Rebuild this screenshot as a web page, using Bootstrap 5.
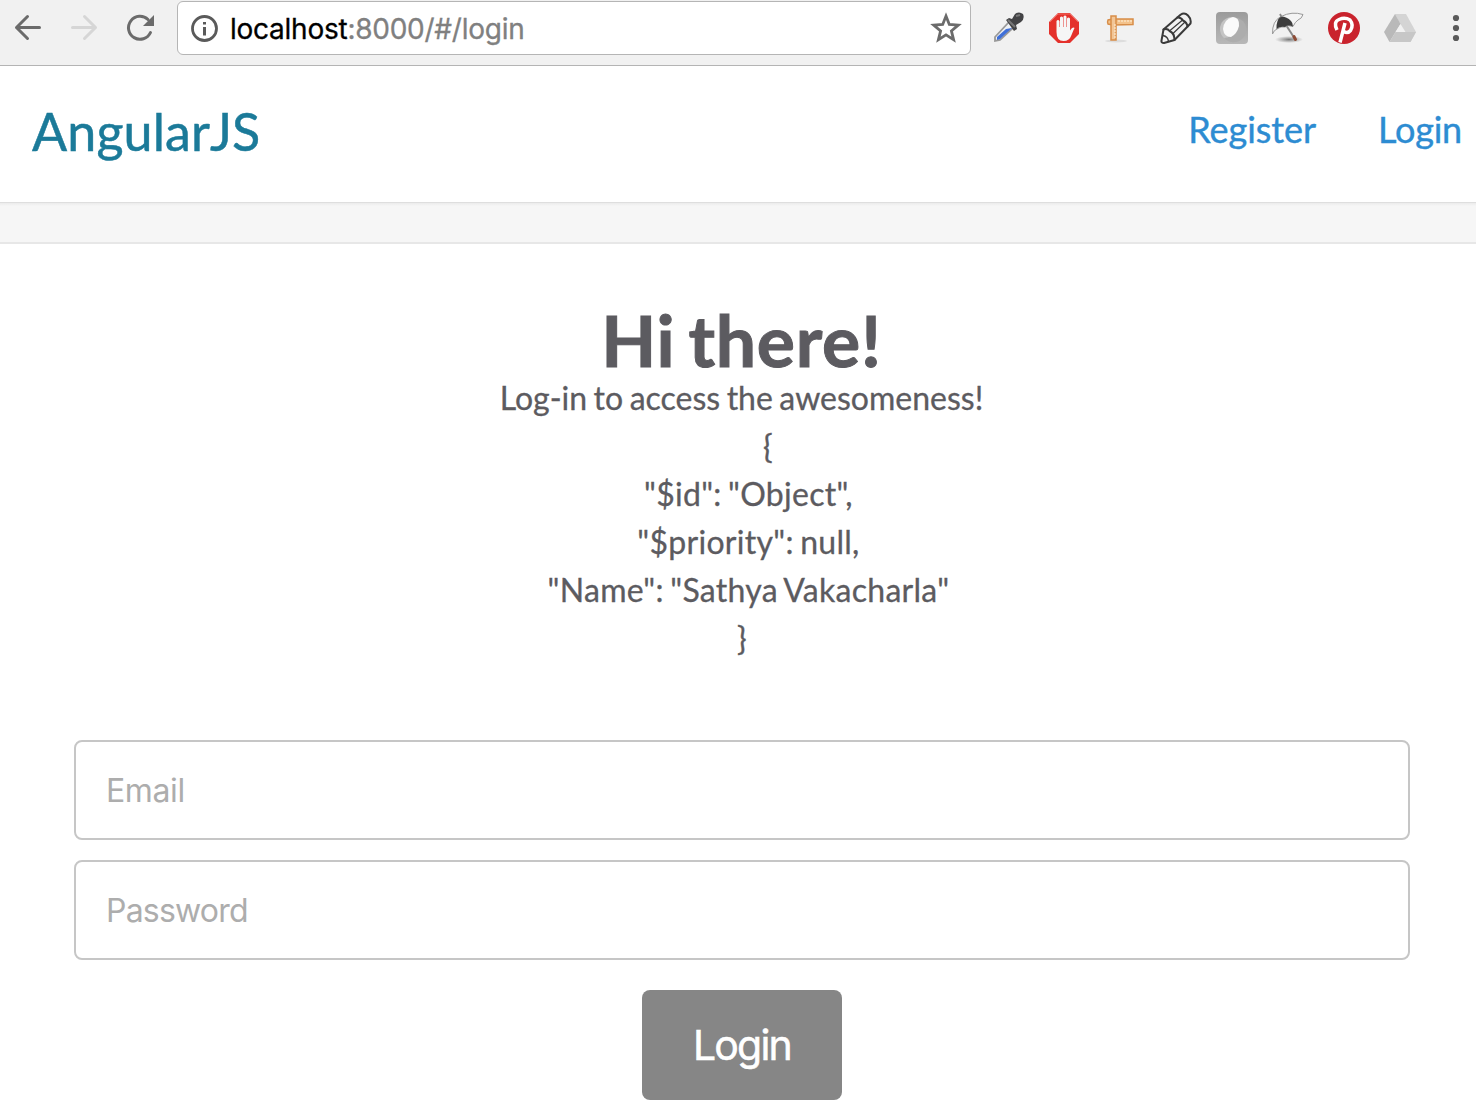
<!DOCTYPE html>
<html lang="en">
<head>
<meta charset="utf-8">
<title>AngularJS</title>
<meta name="viewport" content="width=device-width, initial-scale=1">
<link href="https://cdn.jsdelivr.net/npm/bootstrap@5.3.0/dist/css/bootstrap.min.css" rel="stylesheet">
<style>
body{font-family:Lato,"Liberation Sans",sans-serif;color:#5c5b60;background:#fff;height:1110px;overflow:hidden}
svg{display:block;flex:none}
.toolbar{height:66px;background:#f1f1f1;border-bottom:1px solid #b4b4b4}
.nav-icons{padding:12px 0 0 12px;width:177px;gap:24px}
.omnibox{width:794px;height:54px;margin-top:1px;background:#fff;border:1px solid #b5b5b5;border-radius:6px;padding:0 8px 0 10px}
.url{font:400 28px/52px Inter,Roboto,sans-serif;color:#808080;margin-left:10px;padding-top:2px;letter-spacing:-.25px;white-space:nowrap;-webkit-text-stroke:.3px}
.url b{color:#000;font-weight:400}
.exts{padding:12px 0 0 21px;gap:24px}
.site-header{height:136px;padding:0 14px 11px 32px;background:#fff}
.site-header nav{gap:62px}
.brand{font-size:52px;line-height:60px;color:#1b7a99;text-decoration:none;font-weight:400;padding-top:4px;font-kerning:none;letter-spacing:.1px;-webkit-text-stroke:.5px #1b7a99}
.site-link{font-size:36px;line-height:44px;color:#2d8cd2;text-decoration:none;letter-spacing:-.2px;-webkit-text-stroke:.4px #2d8cd2}
.site-link:first-child{letter-spacing:-.05px}
.band{height:42px;background:linear-gradient(#ebebeb,#f6f6f6 3px);border-top:1px solid #dedede;border-bottom:2px solid #e7e7e7}
.intro{padding-top:57px;padding-left:7px}
.intro h1{font-size:71.500px;line-height:76px;font-weight:700;margin:0;letter-spacing:.7px;word-spacing:-5px;-webkit-text-stroke:1px #5c5b60}
.intro p,.intro pre{font-family:inherit;font-size:32px;line-height:48px;margin:0;overflow:visible;-webkit-text-stroke:.3px #5c5b60}
.intro p{margin-top:-3px;word-spacing:-1.7px}
.intro pre{letter-spacing:.28px;word-spacing:-2px;padding-left:1px}
.login-form{margin:78px 66px 0 74px}
.field{height:100px;border:2px solid #c6c6c6;border-radius:8px;padding:0 30px;font:400 32px/48px Inter,sans-serif;letter-spacing:-.4px;margin-bottom:20px}
.field[type=password]{letter-spacing:-.8px}
.field::placeholder{color:#adadad;opacity:1}
.submit{width:200px;height:110px;margin-top:10px;border:0;border-radius:8px;background:#868686;color:#fff;font:400 41px/60px Inter,sans-serif;letter-spacing:-1.8px;-webkit-text-stroke:.5px #fff}
</style>
</head>
<body>
<div class="toolbar d-flex align-items-start">
  <div class="nav-icons d-flex">
    <svg width="32" height="32" fill="none" stroke="#6b6b6b" stroke-width="3" stroke-linecap="round" stroke-linejoin="round"><path d="M27.500 15.500H4.500M15.500 4.500L4.500 15.500l11 11"/></svg>
    <svg width="32" height="32" fill="none" stroke="#d6d6d6" stroke-width="3" stroke-linecap="round" stroke-linejoin="round"><path d="M4.500 15.500h23M16.500 4.500l11 11-11 11"/></svg>
    <svg width="32" height="32"><path d="M26.500 20.500A11.500 11.500 0 1 1 24 7.500" fill="none" stroke="#6b6b6b" stroke-width="3" stroke-linecap="round"/><path d="M30 3v11H19z" fill="#6b6b6b"/></svg>
  </div>
  <div class="omnibox d-flex align-items-center">
    <svg width="32" height="32"><circle cx="16.500" cy="16.500" r="12" fill="none" stroke="#5a5a5a" stroke-width="2.800"/><path d="M15 10h3v2.500h-3zM15 15h3v8.500h-3z" fill="#5a5a5a"/></svg>
    <div class="url"><b>localhost</b>:8000/#/login</div>
    <svg class="ms-auto" width="32" height="32"><path d="M16 4l3.300 8.400 9 .700-6.900 5.800 2.200 8.800-7.600-4.800-7.600 4.800 2.200-8.800-6.900-5.800 9-.700z" fill="none" stroke="#6b6b6b" stroke-width="2.800"/></svg>
  </div>
  <div class="exts d-flex">
    <svg width="32" height="32"><path d="M3 25L17 10l5 5L8 28l-5 1z" fill="#eef1f5" stroke="#999" stroke-width="1.800"/><path d="M5 25l9-8 6-1L8 27l-3 1z" fill="#3f6fd8"/><path d="M14 8l3-2 3 1 3-5q4-3 8 0 2 5-2 8l-5 3 1 4-3 2z" fill="#434345"/><path d="M16 8l7 7M24 4l4-1" stroke="#777" stroke-width="2"/></svg>
    <svg width="32" height="32"><path d="M10 1h12l9 9v12l-9 9H10l-9-9V10z" fill="#e4312b"/><path d="M2 10l8-8h12l8 8" fill="none" stroke="#f06a60"/><path d="M8.500 18V9q1.500-2 3 0v6h.5V5.500q1.500-2 3 0V15h.5V4.500q1.500-2 3 0V15h.5V6.500q1.500-2 3 0v12l2-2.500q2-1 2.500 0-1 2-3 7-2 6-8 6-7 0-7-9z" fill="#f6f6f6"/></svg>
    <svg width="32" height="32"><ellipse cx="12" cy="29" rx="11" ry="1.500" fill="#ddd"/><path d="M4 8q-1 2 0 4l5 1 20-.5V7L9 7z" fill="#f3c28b" stroke="#d78d48" stroke-width="1.500"/><path d="M7 4h5v24H7z" fill="#f2c697" stroke="#d78d48" stroke-width="1.500"/><path d="M15 8v2m3-2v2m3-2v2m3-2v2m3-2v2M10 13h2m-2 3h2m-2 3h2m-2 3h2m-2 3h2" stroke="#fff1db"/></svg>
    <svg width="32" height="32" fill="none" stroke="#3a3a3a" stroke-width="2" stroke-linejoin="round" stroke-linecap="round"><path d="M1.500 28.500L3.500 17.500L20.500 2.800q4-2.800 7.500.700t2.500 8L14.500 28 4 31q-3 0-2.500-2.500z"/><path d="M3.500 17.500q4-1.500 6 1.500 5 2 5 9M17.500 5.500q3.500-.5 5.500 3 4 2 4.500 6"/><path d="M10 18.500L22 8.500M13 21.500L25 10" stroke-width="1.200"/><path d="M3 23.500q5 1 5.500 6" stroke-width="1.400"/></svg>
    <svg width="32" height="32"><defs><linearGradient id="tile" x2="0" y2="1"><stop stop-color="#9b9b9b"/><stop offset="1" stop-color="#b8b8b8"/></linearGradient></defs><rect width="32" height="32" rx="4" fill="url(#tile)"/><circle cx="16" cy="17" r="12" fill="#c4c4c4"/><path d="M27 9a12 12 0 0 1-19 17q15-1 14-20z" fill="#adadad"/><path d="M17 5q7 1 6 9-2 8-8 11-7 0-8-8Q8 7 17 5z" fill="#fafafa"/></svg>
    <svg width="32" height="32"><defs><radialGradient id="shade"><stop stop-color="#777"/><stop offset="1" stop-color="#888" stop-opacity="0"/></radialGradient></defs><ellipse cx="17" cy="27.500" rx="14" ry="3.500" fill="url(#shade)"/><path d="M14 13l9 14" stroke="#888" stroke-width="2"/><path d="M22 24.500l1.500 3" stroke="#8d4b35" stroke-width="3" stroke-linecap="round"/><path d="M.5 22Q0 9 9 4.500 20-1 31 2.500q-1 4-5 5.500-3 2-5 6.500-5-2-8 .5-4-1-8 2-3 1-4.500 5z" fill="#f4f4f4" stroke="#999"/><path d="M4.500 17Q4 8 9 4.500q6 0 10 4.500 2 2 2 5.500-5-2-8 .5-5-1-8.500 2z" fill="#3d3d3d"/><path d="M8 2l1.500 3" stroke="#888" stroke-width="1.800"/></svg>
    <svg width="32" height="32"><circle cx="16" cy="16" r="16" fill="#c9232d"/><path d="M9 18Q5 10 11 7.500q6-2.500 11 .5 4 5 .5 10.500-3 3.500-6.500 1M17 11Q14.500 21 12 30.500" fill="none" stroke="#fff" stroke-width="3.500"/></svg>
    <svg width="32" height="32"><path d="M11 2h11l10 18-5.500 10L16 12z" fill="#d4d4d4"/><path d="M11 2l5.500 10L5.500 30 0 20z" fill="#b9b9b9"/><path d="M11.500 20H32l-5.500 10h-21z" fill="#c7c7c7"/><path d="M16.500 12l5 8h-10z" fill="#f1f1f1"/></svg>
    <svg width="32" height="32" fill="#5a5a5a"><circle cx="16" cy="6" r="3.100"/><circle cx="16" cy="16" r="3.100"/><circle cx="16" cy="26" r="3.100"/></svg>
  </div>
</div>
<header class="site-header d-flex align-items-center justify-content-between">
  <a class="brand" href="#">AngularJS</a>
  <nav class="d-flex"><a class="site-link" href="#">Register</a><a class="site-link" href="#">Login</a></nav>
</header>
<div class="band"></div>
<main>
  <div class="intro text-center">
    <h1>Hi there!</h1>
    <p>Log-in to access the awesomeness!</p>
<pre>        {
  "$id": "Object",
  "$priority": null,
  "Name": "Sathya Vakacharla"
}</pre>
  </div>
  <form class="login-form d-flex flex-column">
    <input class="field form-control" type="email" placeholder="Email" aria-label="Email">
    <input class="field form-control" type="password" placeholder="Password" aria-label="Password">
    <button class="submit btn align-self-center" type="button">Login</button>
  </form>
</main>
<script src="https://cdn.jsdelivr.net/npm/bootstrap@5.3.0/dist/js/bootstrap.bundle.min.js"></script>
</body>
</html>
